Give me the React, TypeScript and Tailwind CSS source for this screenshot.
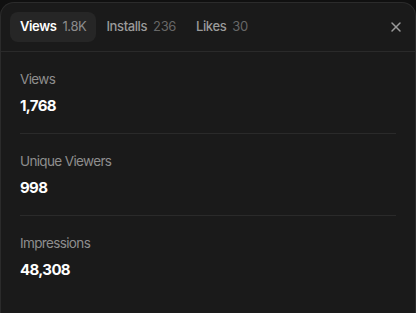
import { X } from "lucide-react"

const tabs = [
  { label: "Views", count: "1.8K", active: true },
  { label: "Installs", count: "236", active: false },
  { label: "Likes", count: "30", active: false },
]

const stats = [
  { label: "Views", value: "1,768" },
  { label: "Unique Viewers", value: "998" },
  { label: "Impressions", value: "48,308" },
]

export default function App() {
  return (
    <div
      className="w-[416px] h-[313px] overflow-hidden bg-[#101010] pt-[2px] tracking-[-0.04em]"
      style={{ fontFamily: "Inter, 'Noto Sans', sans-serif" }}
    >
      <div className="h-full bg-[#1a1a1a] rounded-t-[14px] border-t border-x border-[#2b2b2b]">
        {/* Tabs */}
        <div className="h-[49px] flex items-center pl-[9px] pr-[10px] border-b border-[#2a2a2a]">
          {tabs.map((t) => (
            <div
              key={t.label}
              className={
                t.active
                  ? "h-[30px] flex items-center gap-[6px] px-[10px] rounded-[8px] bg-[#262626] text-[13px] tracking-[-0.03em]"
                  : "h-[30px] flex items-center gap-[6px] px-[10px] rounded-[8px] text-[13px] tracking-[-0.03em]"
              }
            >
              <span className={t.active ? "font-semibold text-white" : "font-medium text-[#9b9b9b]"}>
                {t.label}
              </span>
              <span className={t.active ? "text-[#8c8c8c]" : "text-[#676767]"}>{t.count}</span>
            </div>
          ))}
          <button className="ml-auto mr-[1px] text-[#9a9a9a]" aria-label="Close">
            <X size={16} strokeWidth={2.25} />
          </button>
        </div>

        {/* Stats */}
        <div className="px-[19px]">
          {stats.map((s, i) => (
            <div
              key={s.label}
              className={i < stats.length - 1 ? "pt-[17px] pb-[16px] border-b border-[#2a2a2a]" : "pt-[17px] pb-[16px]"}
            >
              <div className="text-[13.5px] leading-[20px] text-[#8e8e8e]">{s.label}</div>
              <div className="mt-[6px] text-[15px] leading-[22px] font-bold text-white">{s.value}</div>
            </div>
          ))}
        </div>
      </div>
    </div>
  )
}
